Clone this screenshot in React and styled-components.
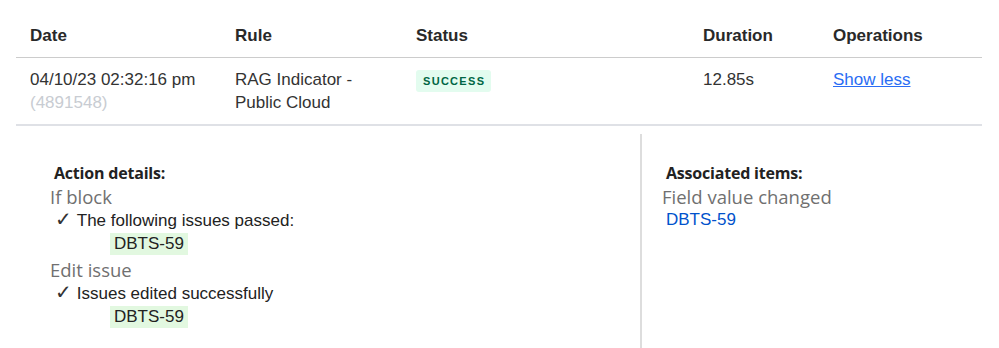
import React from "react";
import styled, { createGlobalStyle } from "styled-components";

const GlobalStyle = createGlobalStyle`
  body {
    margin: 0;
    background: #ffffff;
    font-family: "Liberation Sans", Arial, sans-serif;
    color: #333333;
  }
`;

const columns = "205px 181px 287px 130px 163px";

const Wrapper = styled.div`
  width: 966px;
  padding: 14px 0 0 16px;
`;

const HeadRow = styled.div`
  display: grid;
  grid-template-columns: ${columns};
  border-bottom: 1px solid #cccccc;
`;

const HeadCell = styled.div`
  padding: 10px 14px 9px;
  font-size: 17px;
  line-height: 24px;
  font-weight: bold;
  color: #292929;
`;

const BodyRow = styled.div`
  display: grid;
  grid-template-columns: ${columns};
  border-bottom: 2px solid #dfe1e6;
`;

const Cell = styled.div`
  padding: 10px 14px 10px;
  font-size: 17px;
  line-height: 23px;
  color: #333333;
`;

const Muted = styled.div`
  color: #c8ccd2;
`;

const Badge = styled.span`
  display: inline-block;
  margin-top: -1px;
  padding: 0 6px 0 7px;
  height: 22px;
  line-height: 22px;
  border-radius: 3px;
  background: #e3fcef;
  color: #006644;
  font-size: 11px;
  font-weight: bold;
  letter-spacing: 1.3px;
`;

const Link = styled.a`
  color: #2a6df4;
  text-decoration: underline;
  cursor: pointer;
`;

const Details = styled.div`
  display: flex;
  padding-top: 8px;
`;

const Panel = styled.div`
  width: ${(p) => p.$width}px;
  min-height: 214px;
  box-sizing: border-box;
  padding: 27px 0 0 ${(p) => p.$pad}px;
  border-right: ${(p) => (p.$divider ? "2px solid #dddddd" : "none")};
`;

const Heading = styled.div`
  margin-left: 4px;
  font-family: "Open Sans", "Noto Sans", sans-serif;
  font-size: 16px;
  line-height: 24px;
  font-weight: 700;
  color: #222222;
  letter-spacing: -0.2px;
`;

const Step = styled.div`
  font-family: "Open Sans", "Noto Sans", sans-serif;
  font-size: 18.5px;
  line-height: 24px;
  color: #707070;
`;

const Check = styled.div`
  display: flex;
  align-items: baseline;
  gap: 5px;
  margin-left: 5px;
  font-size: 17px;
  line-height: 24px;
  color: #222222;
`;

const Tick = styled.span`
  font-family: "DejaVu Sans", sans-serif;
  font-size: 20px;
  line-height: 20px;
  color: #333333;
`;

const Tag = styled.div`
  display: inline-block;
  margin: 0 0 3px 60px;
  padding: 0 4px;
  height: 22px;
  line-height: 22px;
  background: #e2f8e0;
  font-size: 17px;
  color: #222222;
`;

const IssueLink = styled.a`
  display: block;
  margin-left: 4px;
  font-size: 17px;
  line-height: 22px;
  color: #0052cc;
  text-decoration: none;
`;

const Block = styled.div`
  display: flex;
  flex-direction: column;
  align-items: flex-start;
`;

export default function App() {
  return (
    <Wrapper>
      <GlobalStyle />
      <HeadRow>
        <HeadCell>Date</HeadCell>
        <HeadCell>Rule</HeadCell>
        <HeadCell>Status</HeadCell>
        <HeadCell>Duration</HeadCell>
        <HeadCell>Operations</HeadCell>
      </HeadRow>
      <BodyRow>
        <Cell>
          04/10/23 02:32:16 pm
          <Muted>(4891548)</Muted>
        </Cell>
        <Cell>RAG Indicator - Public Cloud</Cell>
        <Cell>
          <Badge>SUCCESS</Badge>
        </Cell>
        <Cell>12.85s</Cell>
        <Cell>
          <Link>Show less</Link>
        </Cell>
      </BodyRow>
      <Details>
        <Panel $width={626} $pad={34} $divider>
          <Block>
            <Heading>Action details:</Heading>
            <Step>If block</Step>
            <Check>
              <Tick>✓</Tick>The following issues passed:
            </Check>
            <Tag>DBTS-59</Tag>
            <Step>Edit issue</Step>
            <Check>
              <Tick>✓</Tick>Issues edited successfully
            </Check>
            <Tag>DBTS-59</Tag>
          </Block>
        </Panel>
        <Panel $width={340} $pad={20}>
          <Block>
            <Heading>Associated items:</Heading>
            <Step>Field value changed</Step>
            <IssueLink>DBTS-59</IssueLink>
          </Block>
        </Panel>
      </Details>
    </Wrapper>
  );
}
